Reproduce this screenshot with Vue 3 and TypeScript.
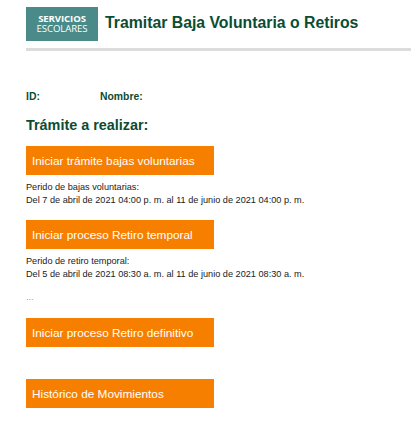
<script setup lang="ts">
interface Block { label: string; notes: string[] }
const blocks: Block[] = [
  { label: 'Iniciar trámite bajas voluntarias', notes: ['Perido de bajas voluntarias:', 'Del 7 de abril de 2021 04:00 p. m. al 11 de junio de 2021 04:00 p. m.'] },
  { label: 'Iniciar proceso Retiro temporal', notes: ['Perido de retiro temporal:', 'Del 5 de abril de 2021 08:30 a. m. al 11 de junio de 2021 08:30 a. m.'] },
]
</script>

<template>
  <div class="page">
    <header class="head">
      <div class="logo">
        <span class="logo-a">SERVICIOS</span>
        <span class="logo-b">ESCOLARES</span>
      </div>
      <h1 class="title">Tramitar Baja Voluntaria o Retiros</h1>
    </header>
    <div class="rule"></div>
    <div class="ids">
      <span class="id">ID:</span>
      <span>Nombre:</span>
    </div>
    <h2 class="sub">Trámite a realizar:</h2>
    <div class="blocks">
      <section v-for="b in blocks" :key="b.label" class="block">
        <button class="btn">{{ b.label }}</button>
        <p class="notes">
          <span v-for="n in b.notes" :key="n" class="note">{{ n }}</span>
        </p>
      </section>
    </div>
    <p class="dots">...</p>
    <button class="btn def">Iniciar proceso Retiro definitivo</button>
    <button class="btn hist">Histórico de Movimientos</button>
  </div>
</template>

<style>
html, body { margin: 0; background: #fff; }
</style>

<style scoped>
.page {
  width: 417px;
  height: 432px;
  box-sizing: border-box;
  padding: 7px 6px 0 26px;
  font-family: "Liberation Sans", Arial, sans-serif;
  overflow: hidden;
  display: flex;
  flex-direction: column;
  align-items: flex-start;
}
.head { display: flex; align-items: center; gap: 7px; height: 34px; }
.logo {
  width: 72px;
  height: 34px;
  background: #4a8a88;
  color: #fff;
  display: flex;
  flex-direction: column;
  align-items: center;
  justify-content: center;
  font-family: "Open Sans", sans-serif;
  font-size: 9.6px;
  line-height: 10px;
  letter-spacing: -0.1px;
}
.logo-a { font-weight: 700; }
.logo-b { font-weight: 400; }
.title {
  margin: 0 0 2px;
  font-size: 15.8px;
  font-weight: 700;
  color: #0b4d33;
  white-space: nowrap;
}
.rule { width: 385px; height: 3px; background: #dcdcdc; margin-top: 7px; }
.ids {
  display: flex;
  margin-top: 39px;
  font-size: 10.4px;
  line-height: 13px;
  font-weight: 700;
  color: #0b4d33;
}
.id { width: 74px; }
.sub {
  margin: 13px 0 0;
  font-size: 14.4px;
  line-height: 18px;
  font-weight: 700;
  color: #0b4d33;
}
.blocks { display: flex; flex-direction: column; gap: 13px; margin-top: 12px; }
.block { display: flex; flex-direction: column; }
.btn {
  display: block;
  width: 188px;
  height: 29px;
  padding: 0 0 0 6px;
  border: 0;
  background: #f77f00;
  color: #fff;
  font-family: inherit;
  font-size: 11.8px;
  text-align: left;
}
.notes { margin: 6px 0 0; display: flex; flex-direction: column; }
.note { font-size: 9.17px; line-height: 13px; color: #222; white-space: nowrap; }
.dots { margin: 10px 0 0; font-size: 9.17px; line-height: 13px; color: #999; }
.def { margin-top: 14px; }
.hist { margin-top: 32px; }
</style>
